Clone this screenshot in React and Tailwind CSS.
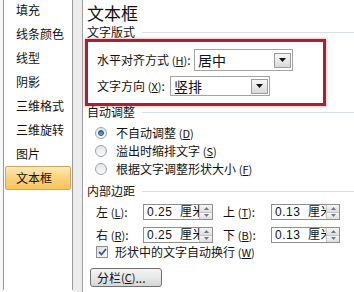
import React from "react";

const F = { fontFamily: '"Noto Sans CJK SC", "Liberation Sans", sans-serif' };

function Key({ k }) {
  return (
    <span className="text-[11px]">
      (<span className="underline">{k}</span>)
    </span>
  );
}

function Header({ text, lineStart }) {
  return (
    <div className="flex items-center h-[12px] leading-[12px] text-[12px] text-[#111] pl-[4px]">
      <span className="whitespace-nowrap">{text}</span>
      <div className={`flex-1 h-px bg-[#d6dde3] ${lineStart}`} />
    </div>
  );
}

function Arrow() {
  return (
    <svg width="7" height="4" viewBox="0 0 7 4">
      <path d="M0 0 H7 L3.5 4 Z" fill="#111" />
    </svg>
  );
}

function Select({ w, h, text }) {
  return (
    <div
      className={`${w} ${h} border border-[#a3a3a3] bg-white flex items-center justify-between pl-[3px] pr-[1px]`}
    >
      <span className="text-[14px] leading-none text-[#111]">{text}</span>
      <div className="w-[17px] h-[15px] border border-[#9c9c9c] bg-gradient-to-b from-[#f7f7f7] to-[#d9d9d9] flex items-center justify-center">
        <Arrow />
      </div>
    </div>
  );
}

function Spin({ value, w }) {
  return (
    <div className={`${w} h-[16px] border border-[#8f8f8f] bg-white flex items-stretch overflow-hidden`}>
      <div
        className="flex-1 min-w-0 overflow-hidden whitespace-nowrap pl-[3px] text-[12px] leading-[14px] text-[#111] tracking-[0.5px]"
        style={{ fontFamily: '"Liberation Sans", "Noto Sans CJK SC", sans-serif' }}
      >
        {value}&nbsp;&nbsp;厘米
      </div>
      <div className="w-[13px] shrink-0 flex flex-col border-l border-[#c9c9c9]">
        <div className="flex-1 bg-gradient-to-b from-[#f6f6f6] to-[#dedede] flex items-center justify-center border-b border-[#c4c4c4]">
          <svg width="5" height="3" viewBox="0 0 5 3">
            <path d="M0 3 H5 L2.5 0 Z" fill="#6a7a8a" />
          </svg>
        </div>
        <div className="flex-1 bg-gradient-to-b from-[#f6f6f6] to-[#dedede] flex items-center justify-center">
          <svg width="5" height="3" viewBox="0 0 5 3">
            <path d="M0 0 H5 L2.5 3 Z" fill="#6a7a8a" />
          </svg>
        </div>
      </div>
    </div>
  );
}

function Radio({ checked, label }) {
  return (
    <div className="flex items-center h-[18px] pl-[12px]">
      <div className="w-[12px] h-[12px] rounded-full border border-[#9aa3ab] bg-gradient-to-b from-[#e6e6e6] to-[#f8f8f8] flex items-center justify-center">
        {checked && (
          <div className="w-[6px] h-[6px] rounded-full bg-gradient-to-b from-[#2a6fb0] to-[#6fb0e8] border border-[#1e4f82]" />
        )}
      </div>
      <span className="ml-[9px] text-[12px] leading-none text-[#111] whitespace-nowrap">{label}</span>
    </div>
  );
}

export default function App() {
  const items = ["填充", "线条颜色", "线型", "阴影", "三维格式", "三维旋转", "图片", "文本框"];
  return (
    <div className="w-[354px] h-[292px] overflow-hidden flex bg-white" style={F}>
      {/* left list */}
      <div className="flex h-full">
        <div className="w-[3px] bg-[#f7f7f7]" />
        <div className="w-[70px] h-full border-x border-[#9c9c9c] bg-white flex flex-col -mt-[2px]">
          {items.map((t, i) =>
            i === items.length - 1 ? (
              <div
                key={t}
                className="h-[24px] mx-[1px] rounded-[2px] border border-[#d4a65c] bg-gradient-to-b from-[#fde9b3] via-[#fcd27e] to-[#f9c35a] flex items-center pl-[10px] text-[12px] text-[#111]"
              >
                {t}
              </div>
            ) : (
              <div key={t} className="h-[24px] flex items-center pl-[12px] text-[12px] text-[#111]">
                {t}
              </div>
            )
          )}
        </div>
        <div className="w-[9px] bg-[#ececec]" />
      </div>

      {/* main panel */}
      <div className="flex-1 h-full border-l border-[#a0a0a0] bg-white flex flex-col">
        <div className="mt-[2px] pl-[4px] h-[21px] text-[17px] leading-[21px] text-[#111]">文本框</div>
        <div className="mt-[3px]">
          <Header text="文字版式" lineStart="ml-[7px]" />
        </div>

        <div className="mt-[1px] ml-[2px] w-[241px] h-[67px] border-[3px] border-[#9d2633] shadow-[0_0_2px_1px_rgba(220,120,130,0.45)] flex flex-col pt-[7px] pl-[9px]">
          <div className="flex items-center">
            <div className="w-[97px] text-[12px] leading-none text-[#111] whitespace-nowrap">
              水平对齐方式 <Key k="H" />:
            </div>
            <Select w="w-[99px]" h="h-[22px]" text="居中" />
          </div>
          <div className="flex items-center mt-[5px]">
            <div className="w-[73px] text-[12px] leading-none text-[#111] whitespace-nowrap">
              文字方向 <Key k="X" />:
            </div>
            <Select w="w-[100px]" h="h-[20px]" text="竖排" />
          </div>
        </div>

        <div className="mt-0">
          <Header text="自动调整" lineStart="ml-[7px]" />
        </div>
        <div className="mt-[6px] flex flex-col">
          <Radio checked label={<>不自动调整 <Key k="D" /></>} />
          <Radio label={<>溢出时缩排文字 <Key k="S" /></>} />
          <Radio label={<>根据文字调整形状大小 <Key k="F" /></>} />
        </div>

        <div className="mt-[7px]">
          <Header text="内部边距" lineStart="ml-[7px]" />
        </div>

        <div className="mt-[7px] flex items-center pl-[13px]">
          <div className="w-[47px] text-[12px] leading-none text-[#111] whitespace-nowrap">
            左 <Key k="L" />:
          </div>
          <Spin value="0.25" w="w-[70px]" />
          <div className="ml-[10px] w-[48px] text-[12px] leading-none text-[#111] whitespace-nowrap">
            上 <Key k="T" />:
          </div>
          <Spin value="0.13" w="w-[69px]" />
        </div>
        <div className="mt-[7px] flex items-center pl-[13px]">
          <div className="w-[47px] text-[12px] leading-none text-[#111] whitespace-nowrap">
            右 <Key k="R" />:
          </div>
          <Spin value="0.25" w="w-[70px]" />
          <div className="ml-[10px] w-[48px] text-[12px] leading-none text-[#111] whitespace-nowrap">
            下 <Key k="B" />:
          </div>
          <Spin value="0.13" w="w-[69px]" />
        </div>

        <div className="mt-[3px] h-[12px] flex items-center pl-[13px]">
          <div className="w-[12px] h-[12px] border border-[#8e8f8f] bg-gradient-to-br from-[#dcdcdc] to-[#fafafa] flex items-center justify-center">
            <svg width="9" height="8" viewBox="0 0 9 8">
              <path d="M1 4 L3.5 6.5 L8 1" fill="none" stroke="#3c5a8c" strokeWidth="1.8" />
            </svg>
          </div>
          <span className="ml-[7px] text-[12px] leading-none text-[#111] whitespace-nowrap">
            形状中的文字自动换行 <Key k="W" />
          </span>
        </div>

        <div className="mt-[10px] ml-[7px] w-[72px] h-[19px] rounded-[3px] border border-[#707070] bg-gradient-to-b from-[#f3f3f3] via-[#e8e8e8] to-[#d6d6d6] flex items-center pl-[6px] text-[12px] leading-none text-[#111] whitespace-nowrap">
          分栏 <Key k="C" />...
        </div>
      </div>
    </div>
  );
}
